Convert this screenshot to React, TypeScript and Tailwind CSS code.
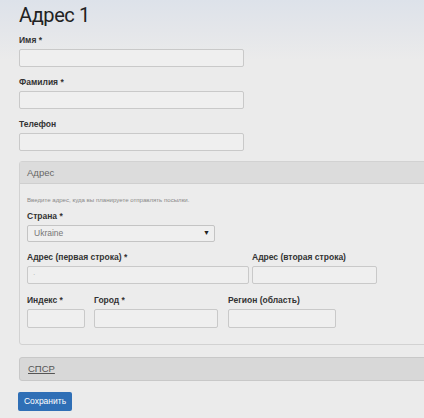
const sans = "font-['Liberation_Sans',Arial,sans-serif]";

function Label({ children }: { children: React.ReactNode }) {
  return (
    <div className="mb-[4px] h-[10px] text-[8.5px] leading-[10px] font-bold text-[#333]">
      {children}
    </div>
  );
}

function Input({ w, h = 18 }: { w: string; h?: number }) {
  return (
    <div
      className={`${w} rounded-[2px] border border-[#c9c9c9] bg-[#efefef]`}
      style={{ height: h }}
    />
  );
}

export default function App() {
  return (
    <div
      className={`${sans} h-[418px] w-[424px] overflow-hidden bg-[linear-gradient(to_bottom,#dde2ea_0px,#e4e6ea_30px,#ebebeb_60px)] pl-[19px] text-[#333]`}
    >
      <h1 className="pt-[3px] font-['Roboto',sans-serif] text-[20px] leading-[24px] font-normal tracking-[-0.4px] text-[#222]">
        Адрес 1
      </h1>

      <div className="mt-[8px]">
        <Label>Имя *</Label>
        <Input w="w-[225px]" />
      </div>
      <div className="mt-[10px]">
        <Label>Фамилия *</Label>
        <Input w="w-[225px]" />
      </div>
      <div className="mt-[10px]">
        <Label>Телефон</Label>
        <Input w="w-[225px]" />
      </div>

      <div className="mt-[10px] w-[420px] rounded-[3px] border border-[#d2d2d2] bg-[#ececec]">
        <div className="h-[22px] border-b border-[#cfcfcf] bg-[#dcdcdc] pl-[7px] text-[9.5px] leading-[22px] text-[#666]">
          Адрес
        </div>
        <div className="pl-[7px] pt-[12px] pb-[16px]">
          <div className="mb-[7px] text-[6.1px] leading-[8px] text-[#888]">
            Введите адрес, куда вы планируете отправлять посылки.
          </div>
          <Label>Страна *</Label>
          <div className="flex h-[17px] w-[188px] items-center justify-between rounded-[2px] border border-[#c4c4c4] bg-[#efefef] pr-[4px] pl-[6px]">
            <span className="text-[8.5px] text-[#777]">Ukraine</span>
            <span className="text-[7px] text-[#222]">▼</span>
          </div>

          <div className="mt-[10px] flex gap-[3px]">
            <div>
              <Label>Адрес (первая строка) *</Label>
              <div className="flex h-[18px] w-[222px] items-center rounded-[2px] border border-[#c9c9c9] bg-[#efefef] pl-[5px] text-[7px] text-[#aaa]">
                ·
              </div>
            </div>
            <div>
              <Label>Адрес (вторая строка)</Label>
              <Input w="w-[125px]" />
            </div>
          </div>

          <div className="mt-[11px] flex">
            <div>
              <Label>Индекс *</Label>
              <Input w="w-[58px]" h={19} />
            </div>
            <div className="ml-[9px]">
              <Label>Город *</Label>
              <Input w="w-[124px]" h={19} />
            </div>
            <div className="ml-[10px]">
              <Label>Регион (область)</Label>
              <Input w="w-[108px]" h={19} />
            </div>
          </div>
        </div>
      </div>

      <div className="mt-[12px] h-[24px] w-[420px] rounded-[3px] border border-[#c8c8c8] bg-[#d8d8d8] pl-[8px] text-[9.5px] leading-[22px] text-[#555] underline">
        СПСР
      </div>

      <button className="mt-[11px] -ml-[1px] h-[19px] w-[54px] rounded-[2px] bg-[#2f6fb6] text-[8.5px] text-white">
        Сохранить
      </button>
    </div>
  );
}
